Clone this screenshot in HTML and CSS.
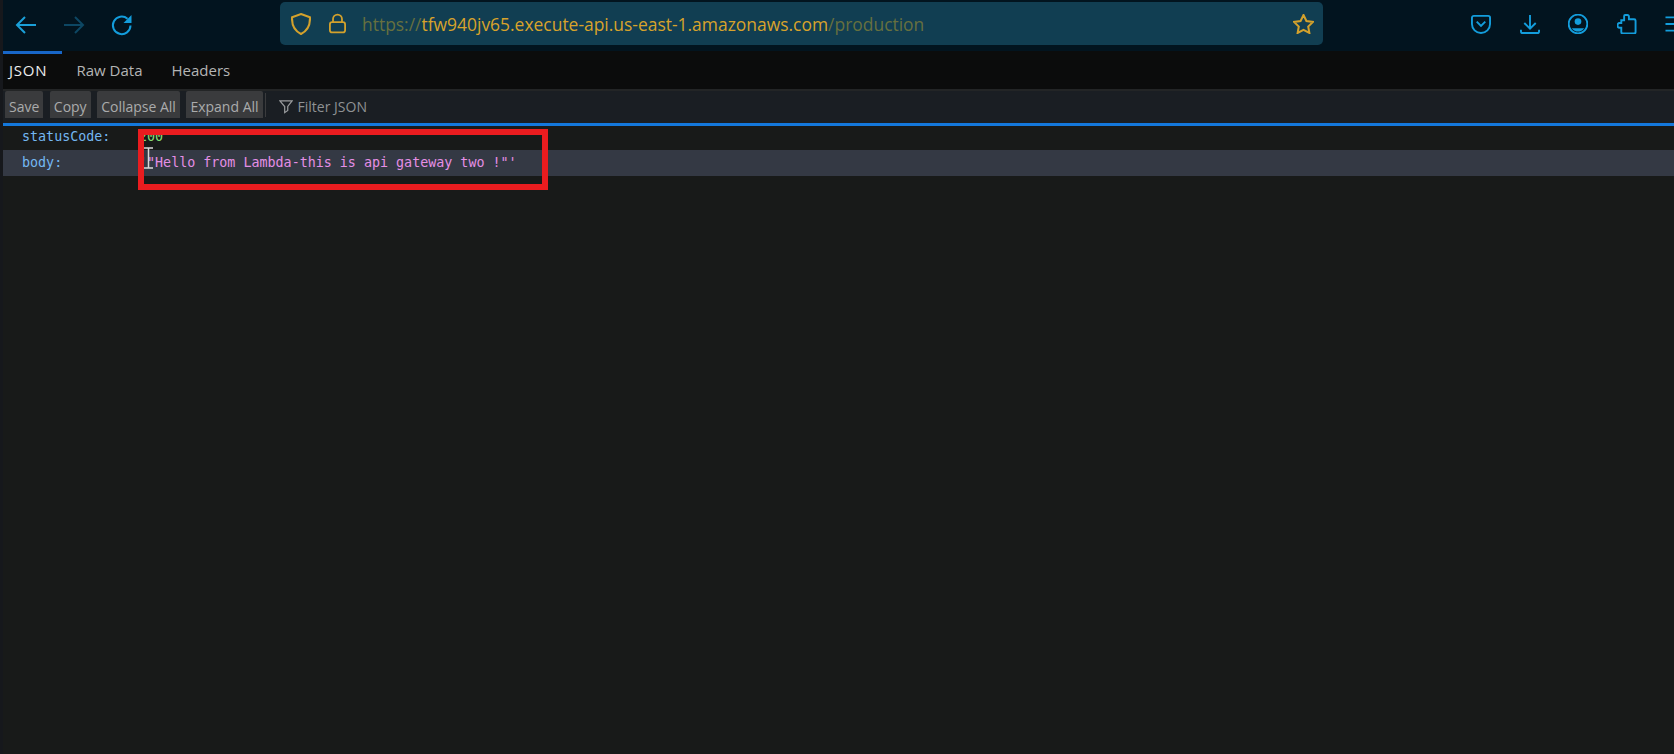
FILE: index.html
```html
<!DOCTYPE html>
<html lang="en">
<head>
<meta charset="utf-8">
<title>JSON viewer</title>
<link rel="stylesheet" href="styles.css">
</head>
<body>
<div class="window">
  <header class="browser">
    <div class="nav">
      <svg class="ico nav-back" viewBox="0 0 24 24"><path d="M22 12H3.500M11 4l-8 8 8 8"/></svg>
      <svg class="ico nav-fwd" viewBox="0 0 24 24"><path d="M2 12h18.500M13 4l8 8-8 8"/></svg>
      <svg class="ico nav-reload" viewBox="0 0 24 24"><path d="M20.500 12.500a8.800 8.800 0 1 1-3-6.800"/><path class="fill" d="M21.500 2v8h-8z"/></svg>
    </div>
    <div class="urlbar">
      <svg class="amber shield" viewBox="2.500 1.500 19 21"><path d="M12 2.500 20.500 5.500c.5 7.500-2.500 13-8.500 16-6-3-9-8.500-8.500-16z"/></svg>
      <svg class="amber lock" viewBox="2.500 1 19 22"><rect x="3.500" y="10.500" width="17" height="11.500" rx="2.500"/><path d="M7 10.500V7a5 5 0 0 1 10 0v3.500"/></svg>
      <span class="url"><span class="dim">https://</span>tfw940jv65.execute-api.us-east-1.amazonaws.com<span class="dim">/production</span></span>
      <svg class="amber star" viewBox="1.500 1.800 21 20"><path d="m12 2.800 2.900 6 6.600.9-4.800 4.600 1.200 6.500-5.900-3.100-5.900 3.100 1.200-6.500-4.800-4.600 6.600-.9z"/></svg>
    </div>
    <div class="tools">
      <svg class="ico tool" viewBox="1.500 1.500 21 21"><path d="M4.500 3.500h15A2 2 0 0 1 21.500 5.500v6.500a9.500 9.500 0 0 1-19 0V5.500a2 2 0 0 1 2-2z"/><path d="m7.500 9.500 4.500 4.500 4.500-4.500"/></svg>
      <svg class="ico tool" viewBox="1.500 1.500 21 21"><path d="M12 2.500v14M6 11l6 6 6-6M2.500 18v1.500a2 2 0 0 0 2 2h15a2 2 0 0 0 2-2V18"/></svg>
      <svg class="ico tool" viewBox="1.500 1.500 21 21"><circle cx="12" cy="12" r="9.800"/><circle class="fill" cx="12" cy="9.500" r="3.500"/><path class="fill" d="M5.500 16.500h13c-1.500 2.500-4 3.500-6.500 3.500s-5-1-6.500-3.500z"/></svg>
      <svg class="ico tool" viewBox="1.500 1.500 21 21"><path d="M10 2.500h2.500a1.500 1.500 0 0 1 1.500 1.500v3h5.500a1.500 1.500 0 0 1 1.500 1.500v12a1.500 1.500 0 0 1-1.500 1.500H7.500A1.500 1.500 0 0 1 6 20.500V16H4.500a2.500 2.500 0 0 1 0-5H6V8H9V3.500a1 1 0 0 1 1-1z"/></svg>
      <svg class="ico tool menu" viewBox="1.500 1.500 21 21"><path d="M2 5h20M2 12h20M2 19h20"/></svg>
    </div>
  </header>

  <main class="viewer">
    <nav class="tabs">
      <span class="tab active">JSON</span>
      <span class="tab">Raw Data</span>
      <span class="tab">Headers</span>
    </nav>
    <div class="actions">
      <span class="btn">Save</span>
      <span class="btn">Copy</span>
      <span class="btn">Collapse All</span>
      <span class="btn">Expand All</span>
      <span class="sep"></span>
      <span class="filter">
        <svg class="funnel" viewBox="0 0 16 16"><path d="M1 1.500h14L10 8v4.500L6.500 15V8z"/></svg>
        Filter JSON
      </span>
    </div>
    <div class="rows">
      <div class="row"><span class="key">statusCode:</span><span class="num">200</span></div>
      <div class="row selected"><span class="key">body:</span><span class="str">'"Hello from Lambda-this is api gateway two !"'</span></div>
    </div>
    <div class="annotation"></div>
    <svg class="cursor" viewBox="0 0 9 22"><path d="M0 1h9M4.500 1v20M0 21h9"/></svg>
  </main>
</div>
</body>
</html>
```
FILE: styles.css
```css
* { box-sizing: border-box; }
html, body { margin: 0; height: 100%; }
body {
  background: #181a19;
  font-family: "Open Sans", "Noto Sans", "Liberation Sans", sans-serif;
  overflow: hidden;
}
.window {
  width: 1674px;
  height: 754px;
  display: flex;
  flex-direction: column;
  overflow: hidden;
  border-left: 3px solid #16181c;
}
.browser {
  height: 51px;
  flex: none;
  background: #02141f;
  display: flex;
  align-items: flex-start;
}
.ico { fill: none; stroke: #139ddc; stroke-width: 2; }
.ico .fill { fill: #139ddc; stroke: none; }
.nav {
  width: 277px;
  height: 49px;
  flex: none;
  display: flex;
  align-items: center;
  padding-left: 11px;
  gap: 24px;
}
.nav svg { width: 24px; height: 24px; flex: none; }
.nav .nav-fwd { stroke: #0d4763; }
.nav .nav-back { stroke: #1aa0d8; }
.urlbar {
  width: 1043px;
  height: 43px;
  margin-top: 2px;
  flex: none;
  background: #113e52;
  border-radius: 5px;
  display: flex;
  align-items: center;
  padding-left: 11px;
  padding-right: 9px;
}
.amber { fill: none; stroke: #d3a12c; stroke-width: 2; flex: none; }
.shield { width: 20px; height: 22px; }
.lock { width: 17px; height: 21px; margin-left: 18px; }
.url {
  margin-left: 16px;
  font-size: 17.450px;
  color: #d8a32b;
  white-space: nowrap;
  flex: 1;
}
.dim { color: #66703f; }
.star { width: 21px; height: 20px; }
.tools {
  display: flex;
  align-items: center;
  height: 47px;
  flex: none;
  padding-left: 148px;
  gap: 28.500px;
}
.tool { width: 20px; height: 20px; flex: none; }
.viewer {
  position: relative;
  flex: 1;
  display: flex;
  flex-direction: column;
}
.tabs {
  height: 38px;
  flex: none;
  background: #0b0c0c;
  display: flex;
  align-items: center;
  font-size: 15px;
  color: #b4b5b5;
}
.tab { padding: 0 14.500px; }
.tab.active {
  color: #ececec;
  align-self: stretch;
  display: flex;
  align-items: center;
  width: 59px;
  padding: 0 0 0 6px;
  letter-spacing: 0.800px;
  box-shadow: inset 0 3px 0 #1866c8;
}
.actions {
  height: 34px;
  flex: none;
  background: #1a1e23;
  border-top: 2px solid #232526;
  display: flex;
  align-items: flex-start;
  padding-left: 2px;
  gap: 6.500px;
  font-size: 14px;
  color: #aaabac;
}
.btn {
  height: 27px;
  padding: 3px 4px 0;
  background: #3a3b3d;
  border-radius: 2px 2px 0 0;
  display: flex;
  align-items: center;
}
.sep {
  width: 1px;
  height: 24px;
  background: #3a3b3d;
  margin-left: -4px;
  margin-top: 2px;
}
.filter {
  height: 27px;
  padding-top: 3px;
  margin-left: 6px;
  display: flex;
  align-items: center;
  gap: 5px;
  color: #8f9294;
}
.funnel { width: 14px; height: 15px; fill: none; stroke: #9a9c9e; stroke-width: 1.400; }
.rows {
  border-top: 3px solid #1478dc;
  font-family: "DejaVu Sans Mono", "Liberation Mono", monospace;
  font-size: 13.350px;
}
.row {
  display: flex;
  align-items: center;
  height: 24px;
  padding-left: 19px;
  padding-bottom: 3px;
}
.row.selected { height: 26px; padding-bottom: 1px; background: #343944; }
.key { width: 117px; color: #74b7f2; flex: none; }
.num { color: #86de74; }
.str { color: #e58fe6; }
.annotation {
  position: absolute;
  left: 135px;
  top: 78px;
  width: 410px;
  height: 61px;
  border: 6px solid #ea1c1f;
}
.cursor {
  position: absolute;
  left: 141px;
  top: 96px;
  width: 9px;
  height: 22px;
  fill: none;
  stroke: #d8d8d8;
  stroke-width: 1.500;
}
```
